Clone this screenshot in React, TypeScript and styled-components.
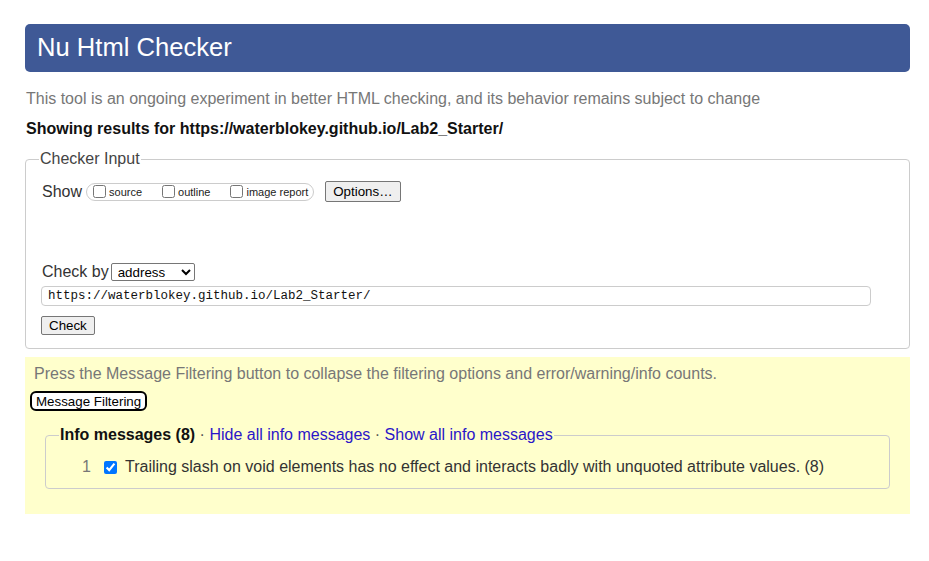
import React from "react";
import styled, { createGlobalStyle } from "styled-components";

const Global = createGlobalStyle`
  html, body { margin: 0; padding: 0; background: #fff; }
  body { font-family: "Liberation Sans", Arial, sans-serif; color: #222; }
`;

const Page = styled.div`
  width: 885px;
  padding: 24px 0 40px 25px;
`;

const Header = styled.header`
  height: 48px;
  background: #3f5996;
  border-radius: 5px;
  display: flex;
  align-items: center;
  padding-left: 12px;
`;

const Title = styled.h1`
  margin: 0;
  font-size: 25.6px;
  font-weight: normal;
  color: #fff;
  line-height: 1;
`;

const Intro = styled.p`
  margin: 17px 0 0 1px;
  font-size: 16px;
  line-height: 20px;
  color: #777;
`;

const Showing = styled.p`
  margin: 10px 0 0 1px;
  font-size: 16px;
  line-height: 20px;
  font-weight: bold;
  color: #111;
`;

const InputFieldset = styled.fieldset`
  margin: 10px 0 0;
  padding: 12px 16px 13px;
  border: 1px solid #ccc;
  border-radius: 4px;
`;

const Legend = styled.legend`
  padding: 0 1px;
  margin-left: -3px;
  font-size: 16px;
  color: #444;
  line-height: 20px;
`;

const Row = styled.div`
  display: flex;
  align-items: center;
  font-size: 16px;
  color: #333;
`;

const ShowGroup = styled.span`
  display: inline-flex;
  align-items: center;
  height: 16px;
  margin-left: 4px;
  padding: 0 5px 0 4px;
  border: 1px solid #ccc;
  border-radius: 9px;
`;

const SmallLabel = styled.label<{ $gap?: number }>`
  display: inline-flex;
  align-items: center;
  font-size: 11px;
  color: #222;
  margin-right: ${(p) => p.$gap ?? 0}px;
`;

const Box = styled.input`
  width: 13px;
  height: 13px;
  margin: 0 3px 0 2px;
`;

const Button = styled.button<{ $h?: number }>`
  font-family: "Liberation Sans", Arial, sans-serif;
  font-size: 13.33px;
  height: ${(p) => p.$h ?? 21}px;
  padding: 0 7px;
  background: #efefef;
  border: 1px solid #767676;
  border-radius: 2px;
  color: #000;
`;

const Spacer = styled.div`
  height: 61px;
`;

const Select = styled.select`
  margin-left: 2px;
  width: 84px;
  height: 18px;
  font-family: "Liberation Sans", Arial, sans-serif;
  font-size: 13.33px;
  border: 1px solid #767676;
  border-radius: 2px;
  background: #fff;
  padding: 0 2px;
`;

const UrlInput = styled.input`
  display: block;
  box-sizing: border-box;
  margin: 5px 0 0 -1px;
  width: 830px;
  height: 20px;
  border: 1px solid #ccc;
  border-radius: 4px;
  padding: 0 6px;
  font-family: "Liberation Mono", "Courier New", monospace;
  font-size: 12.5px;
  color: #111;
  outline: none;
`;

const CheckRow = styled.div`
  margin: 10px 0 0 -1px;
`;

const Results = styled.section`
  margin-top: 8px;
  background: #ffffcc;
  padding: 8px 20px 25px;
`;

const Note = styled.p`
  margin: 0 0 0 -11px;
  font-size: 16px;
  line-height: 18px;
  color: #777;
`;

const FilterButton = styled.button`
  margin: 8px 0 0 -15px;
  height: 20px;
  padding: 0 4px;
  font-family: "Liberation Sans", Arial, sans-serif;
  font-size: 13.33px;
  background: #fff;
  border: 2px solid #000;
  border-radius: 6px;
  color: #000;
`;

const InfoFieldset = styled.fieldset`
  margin: 14px 0 0;
  padding: 12px 16px 11px 14px;
  border: 1px solid #ccc;
  border-radius: 4px;
`;

const InfoLegend = styled.legend`
  padding: 0 1px;
  margin-left: -1px;
  font-size: 16px;
  line-height: 20px;
  color: #555;
`;

const Strong = styled.b`
  color: #111;
`;

const Link = styled.a`
  color: #2a16c8;
  text-decoration: none;
`;

const MsgRow = styled.div`
  display: flex;
  align-items: center;
  padding-left: 22px;
  font-size: 16px;
  line-height: 20px;
  color: #333;
`;

const Num = styled.span`
  color: #777;
  width: 20px;
`;

const MsgBox = styled.input`
  width: 13px;
  height: 13px;
  margin: 0 8px 0 2px;
  accent-color: #0075ff;
`;

export default function App() {
  return (
    <>
      <Global />
      <Page>
        <Header>
          <Title>Nu Html Checker</Title>
        </Header>
        <Intro>This tool is an ongoing experiment in better HTML checking, and its behavior remains subject to change</Intro>
        <Showing>Showing results for https://waterblokey.github.io/Lab2_Starter/</Showing>
        <InputFieldset>
          <Legend>Checker Input</Legend>
          <Row>
            Show
            <ShowGroup>
              <SmallLabel $gap={18}><Box type="checkbox" />source</SmallLabel>
              <SmallLabel $gap={18}><Box type="checkbox" />outline</SmallLabel>
              <SmallLabel><Box type="checkbox" />image report</SmallLabel>
            </ShowGroup>
            <Button style={{ marginLeft: 11 }}>Options…</Button>
          </Row>
          <Spacer />
          <Row>
            Check by
            <Select defaultValue="address">
              <option value="address">address</option>
              <option value="file">file upload</option>
              <option value="text">text input</option>
            </Select>
          </Row>
          <UrlInput defaultValue="https://waterblokey.github.io/Lab2_Starter/" />
          <CheckRow>
            <Button $h={19}>Check</Button>
          </CheckRow>
        </InputFieldset>
        <Results>
          <Note>Press the Message Filtering button to collapse the filtering options and error/warning/info counts.</Note>
          <FilterButton>Message Filtering</FilterButton>
          <InfoFieldset>
            <InfoLegend>
              <Strong>Info messages (8)</Strong> · <Link href="#">Hide all info messages</Link> · <Link href="#">Show all info messages</Link>
            </InfoLegend>
            <MsgRow>
              <Num>1</Num>
              <MsgBox type="checkbox" defaultChecked />
              Trailing slash on void elements has no effect and interacts badly with unquoted attribute values. (8)
            </MsgRow>
          </InfoFieldset>
        </Results>
      </Page>
    </>
  );
}
